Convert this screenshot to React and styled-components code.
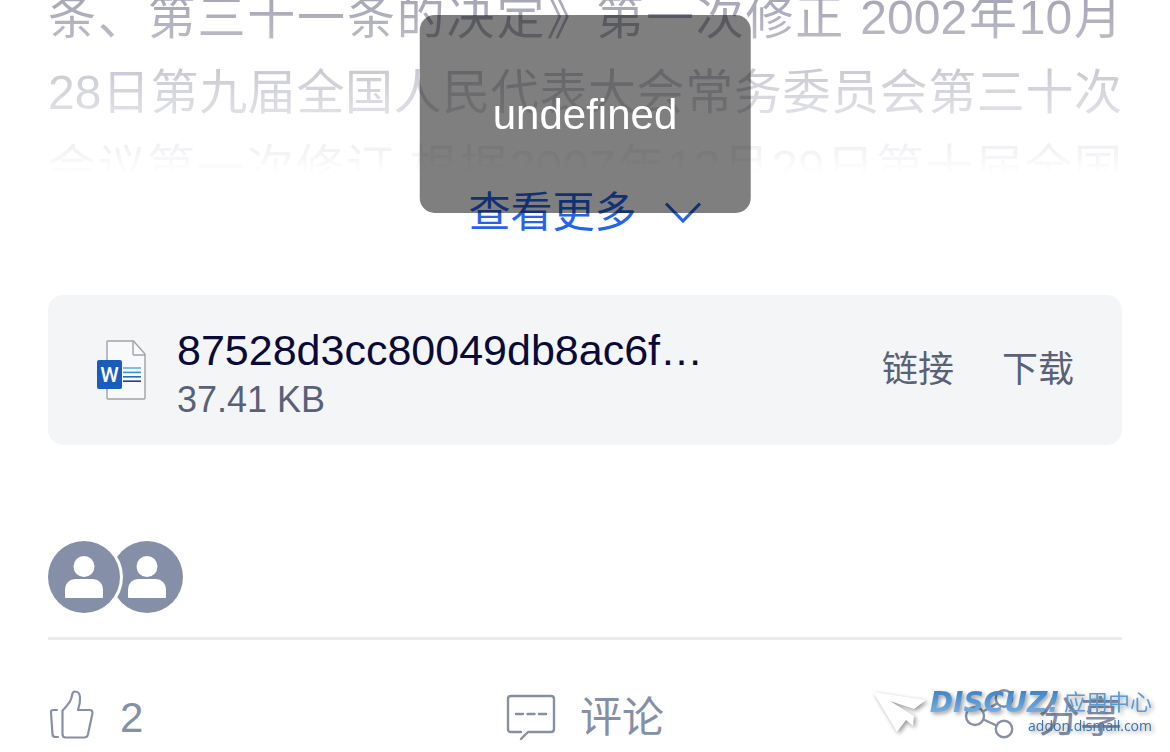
import React from 'react'
import styled, { createGlobalStyle } from 'styled-components'

const GlobalStyle = createGlobalStyle`
    * {
        box-sizing: border-box;
    }

    body {
        margin: 0;
        background: #fff;
        font-family: 'Liberation Sans', 'Noto Sans CJK SC', sans-serif;
        color: #0a0a38;
    }

    button {
        display: flex;
        align-items: center;
        padding: 0;
        border: 0;
        background: none;
        font-family: inherit;
        cursor: pointer;
    }

    svg {
        display: block;
        flex: none;
    }
`

const Page = styled.main`
    padding: 0 48px;
`

const Article = styled.article`
    height: 174px;
    overflow: hidden;
    mask-image: linear-gradient(to bottom, rgba(0, 0, 0, 0.36), transparent);
`

const ArticleText = styled.p`
    margin: -20px 0 0;
    font-size: 48px;
    line-height: 75px;
    text-align: justify;
    text-align-last: justify;
`

const MoreButton = styled.button`
    margin: 7px auto 0;
    gap: 27px;
    height: 64px;
    font-size: 42px;
    line-height: 64px;
    color: #2463eb;
`

const FileCard = styled.section`
    display: flex;
    align-items: center;
    gap: 30px;
    margin-top: 50px;
    padding: 0 48px;
    height: 150px;
    border-radius: 15px;
    background: #f4f5f7;
`

const FileInfo = styled.div`
    flex: 1;
    min-width: 0;
    padding-top: 10px;
`

const FileName = styled.div`
    font-size: 43px;
    line-height: 50px;
`

const FileSize = styled.div`
    font-size: 36px;
    line-height: 50px;
    color: #596178;
`

const FileActions = styled.div`
    display: flex;
    gap: 48px;
`

const FileButton = styled.button`
    font-size: 36px;
    line-height: 50px;
    color: #596178;
`

const Likers = styled.div`
    display: flex;
    padding: 96px 0 24px;
    border-bottom: 3px solid #ececec;
`

const Avatar = styled.div`
    position: relative;
    z-index: ${props => props.$order};
    width: 72px;
    height: 72px;
    border-radius: 50%;
    background: #858fa8;
    box-shadow: 0 0 0 3px #fff;

    & + & {
        margin-left: -9px;
    }
`

const ActionBar = styled.footer`
    display: grid;
    grid-template-columns: 1fr 1fr 1fr;
    align-items: center;
    height: 112px;
    padding-top: 44px;
`

const ActionButton = styled.button`
    justify-self: ${props => props.$align};
    gap: 24px;
    font-size: 42px;
    line-height: 64px;
    color: #858fa8;
`

const Toast = styled.div`
    position: fixed;
    z-index: 10;
    top: 15px;
    left: 50%;
    transform: translateX(-50%);
    padding: 76px 73px 74px;
    border-radius: 15px;
    background: rgba(0, 0, 0, 0.5);
    color: #fff;
    font-size: 42px;
    line-height: 48px;
`

const Watermark = styled.aside`
    position: fixed;
    z-index: 5;
    right: 18px;
    bottom: 15px;
    display: flex;
    align-items: flex-start;
    gap: 4px;
    pointer-events: none;
    filter: drop-shadow(2px 2px 2px rgba(0, 0, 0, 0.4));
`

const MarkText = styled.div`
    display: flex;
    flex-direction: column;
    align-items: flex-end;
`

const MarkTitle = styled.div`
    display: flex;
    align-items: center;
    gap: 4px;
    height: 24px;
    font-size: 22px;
    line-height: 24px;
    color: #5b9bd5;
`

const MarkLogo = styled.strong`
    font-family: 'DejaVu Sans', sans-serif;
    font-size: 28px;
    font-style: italic;
    font-weight: 700;
    background: linear-gradient(to bottom, #3f84c8, #7ab3e4);
    background-clip: text;
    color: transparent;
`

const MarkUrl = styled.div`
    font-family: 'Open Sans', sans-serif;
    font-size: 14px;
    line-height: 22px;
    color: #3a74a8;
`

const ChevronIcon = () => (
    <svg width="38" height="24" viewBox="0 0 38 24" fill="none" stroke="currentColor" strokeWidth="3.2">
        <path d="M2 2.500 19 20 36 2.500" />
    </svg>
)

const WordIcon = () => (
    <svg width="51" height="60" viewBox="0 0 51 60" fill="none">
        <path d="M11.5 1h26L49 14v44a1 1 0 0 1-1 1H12a1 1 0 0 1-1-1V2a1 1 0 0 1 .5-1Z" fill="#f8f9fa" stroke="#a2a2a2" strokeWidth="1.4" />
        <path d="M37 1v13a1 1 0 0 0 1 1h11" stroke="#a2a2a2" strokeWidth="1.4" />
        <rect x="1" y="20" width="25" height="29" rx="2" fill="#1a5cbe" />
        <path d="M27 28h18" stroke="#55b5ec" strokeWidth="1.6" />
        <path d="M27 32.4h18" stroke="#3f8fd0" strokeWidth="1.6" />
        <path d="M27 36.8h18" stroke="#2b68b8" strokeWidth="1.6" />
        <path d="M27 41.2h18" stroke="#1b3f8f" strokeWidth="1.6" />
        <text x="13.5" y="42" textAnchor="middle" fill="#fff" fontFamily="Roboto, sans-serif" fontSize="21" fontWeight="500">W</text>
    </svg>
)

const PersonIcon = () => (
    <svg width="72" height="72" viewBox="0 0 72 72" fill="#fff">
        <circle cx="36" cy="25.5" r="10.5" />
        <path d="M17 56V48a10 10 0 0 1 10-10h18a10 10 0 0 1 10 10v8a1 1 0 0 1-1 1H18a1 1 0 0 1-1-1Z" />
    </svg>
)

const LikeIcon = () => (
    <svg width="48" height="60" viewBox="0 0 48 60" fill="none" stroke="currentColor" strokeWidth="2.2" strokeLinecap="round" strokeLinejoin="round">
        <path d="M9 22H5Q2.800 22 3 24.500L4.500 46.500Q4.800 49 7.500 49H10" />
        <path d="M14.500 22.500V46Q14.500 49.500 17.500 49.500H36.500Q39 49.500 39.800 47L44.300 26Q45 22 41.500 22H30Q32.500 15 32 9Q31.500 3.500 27 3.500Q24.500 3.500 24 7.500C23.500 14 18.500 18 14.500 22.500Z" />
    </svg>
)

const CommentIcon = () => (
    <svg width="50" height="50" viewBox="0 0 50 50" fill="none" stroke="currentColor" strokeWidth="2.4" strokeLinecap="round" strokeLinejoin="round">
        <path d="M15 39H5Q2 39 2 36V6Q2 3 5 3H45Q48 3 48 6V36Q48 39 45 39H22L15 46" />
        <path d="M10 21h7M21.500 21h7M33 21h7" />
    </svg>
)

const ShareIcon = () => (
    <svg width="50" height="60" viewBox="0 0 50 60" fill="none" stroke="currentColor" strokeWidth="2.4">
        <circle cx="11" cy="28" r="9" />
        <circle cx="40" cy="10.500" r="8.200" />
        <circle cx="40" cy="41" r="8.200" />
        <path d="M19 23.500 33 15.500M19.500 31.500 32.500 37.500" />
    </svg>
)

const PlaneIcon = () => (
    <svg width="53" height="41" viewBox="0 0 53 41">
        <path d="M0 1 53 9 41 18 17 10 41 25 40 35 33 29 24 41Z" fill="#fff" />
    </svg>
)

const App = () => {
    return (
        <>
            <GlobalStyle />
            <Page>
                <Article>
                    <ArticleText>
                        条、第三十一条的决定》第一次修正 2002年10月28日第九届全国人民代表大会常务委员会第三十次会议第一次修订 根据2007年12月29日第十届全国
                    </ArticleText>
                </Article>
                <MoreButton type="button">
                    查看更多
                    <ChevronIcon />
                </MoreButton>

                <FileCard>
                    <WordIcon />
                    <FileInfo>
                        <FileName>87528d3cc80049db8ac6f…</FileName>
                        <FileSize>37.41 KB</FileSize>
                    </FileInfo>
                    <FileActions>
                        <FileButton type="button">链接</FileButton>
                        <FileButton type="button">下载</FileButton>
                    </FileActions>
                </FileCard>

                <Likers>
                    <Avatar $order={2}><PersonIcon /></Avatar>
                    <Avatar $order={1}><PersonIcon /></Avatar>
                </Likers>

                <ActionBar>
                    <ActionButton type="button" $align="start">
                        <LikeIcon />
                        2
                    </ActionButton>
                    <ActionButton type="button" $align="center">
                        <CommentIcon />
                        评论
                    </ActionButton>
                    <ActionButton type="button" $align="end">
                        <ShareIcon />
                        分享
                    </ActionButton>
                </ActionBar>
            </Page>

            <Toast role="status">undefined</Toast>

            <Watermark>
                <PlaneIcon />
                <MarkText>
                    <MarkTitle>
                        <MarkLogo>DISCUZ!</MarkLogo>
                        应用中心
                    </MarkTitle>
                    <MarkUrl>addon.dismall.com</MarkUrl>
                </MarkText>
            </Watermark>
        </>
    )
}

export default App
